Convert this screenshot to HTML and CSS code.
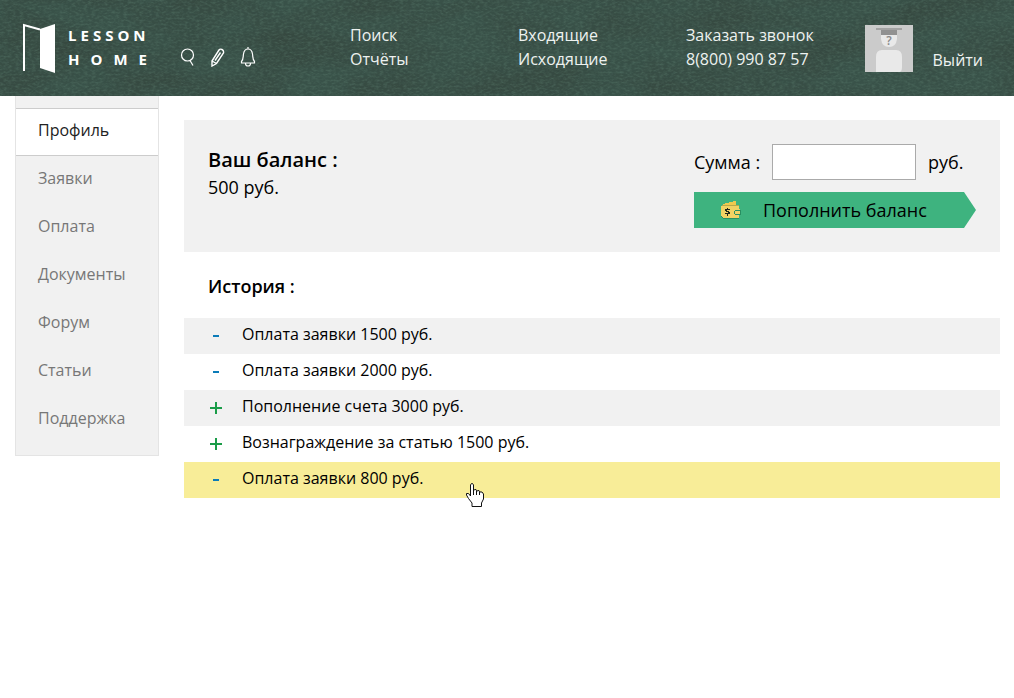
FILE: index.html
```html
<!DOCTYPE html>
<html lang="ru">
<head>
<meta charset="utf-8">
<meta name="viewport" content="width=device-width, initial-scale=1">
<title>Lesson Home</title>
<link rel="stylesheet" href="styles.css">
</head>
<body>
<header class="header">
  <svg class="board" width="100%" height="100%" preserveAspectRatio="none" aria-hidden="true">
    <filter id="grain" x="0" y="0" width="100%" height="100%" color-interpolation-filters="sRGB">
      <feTurbulence type="fractalNoise" baseFrequency="0.25 0.5" numOctaves="3" seed="8"/>
      <feColorMatrix values="0 0 0 0 0.4  0 0 0 0 0.55  0 0 0 0 0.48  0.7 0 0 0 -0.28"/>
    </filter>
    <filter id="smudge" x="0" y="0" width="100%" height="100%" color-interpolation-filters="sRGB">
      <feTurbulence type="fractalNoise" baseFrequency="0.012 0.03" numOctaves="4" seed="3"/>
      <feColorMatrix values="0 0 0 0 0.2  0 0 0 0 0.25  0 0 0 0 0.22  1 0 0 0 -0.3"/>
    </filter>
    <rect width="100%" height="100%" filter="url(#smudge)"/>
    <rect width="100%" height="100%" filter="url(#grain)"/>
  </svg>
  <div class="brand">
    <a class="logo" href="#">
      <svg width="34" height="50" viewBox="0 0 34 50" aria-hidden="true">
        <path d="M1 48V2L17 6.500" fill="none" stroke="#fff" stroke-width="2"/>
        <path d="M17 6L32 1V50L17 45Z" fill="#fff"/>
      </svg>
      <span class="logo-text"><span class="logo-top">LESSON</span><span class="logo-bottom">HOME</span></span>
    </a>
    <nav class="tools">
      <a href="#" aria-label="Поиск"><svg width="16" height="20" viewBox="0 0 16 20"><circle cx="7.500" cy="8" r="6" /><path d="M10 13.500l3 5"/></svg></a>
      <a href="#" aria-label="Редактировать"><svg width="16" height="20" viewBox="0 0 16 20"><path d="M2 14L9 3Q10 1.500 12 2.500T13.500 6L6.500 16.500L2 19ZM2 14l4.500 2.500M5 13.500L10.500 5.500" stroke-width="1.400"/></svg></a>
      <a href="#" aria-label="Уведомления"><svg width="16" height="20" viewBox="0 0 16 20"><path d="M8 0v2M1.500 14.500C3.500 12.500 3 10 3.500 7C4 3.500 5.500 2 8 2s4 1.500 4.500 5c.5 3 0 5.500 2 7.500v1.500h-13ZM5.500 16.500q0 2.500 2.500 2.500t2.500-2.500"/></svg></a>
    </nav>
  </div>
  <nav class="links">
    <div class="links-col"><a href="#">Поиск</a><a href="#">Отчёты</a></div>
    <div class="links-col"><a href="#">Входящие</a><a href="#">Исходящие</a></div>
    <div class="links-col"><a href="#">Заказать звонок</a><a href="#">8(800) 990 87 57</a></div>
  </nav>
  <div class="user">
    <svg class="avatar" width="48" height="47" viewBox="0 0 48 47" role="img" aria-label="Аватар">
      <rect width="48" height="47" fill="#cbcbcb"/>
      <path d="M16 10H32V14Q31 22 24 22T16 14Z" fill="#e9e9e9"/>
      <path d="M16 4H32V10H16Z" fill="#919191"/>
      <path d="M11 3H37V5H11Z" fill="#a2a2a2"/>
      <path d="M11 47V32Q11 25 17 25H31Q37 25 37 32V42Q37 46 35 47Z" fill="#e9e9e9"/>
      <text class="avatar-mark" x="24" y="20" text-anchor="middle">?</text>
    </svg>
    <a class="logout" href="#">Выйти</a>
  </div>
</header>
<div class="page">
  <nav class="sidebar">
    <a class="side-link side-link-active" href="#">Профиль</a>
    <a class="side-link" href="#">Заявки</a>
    <a class="side-link" href="#">Оплата</a>
    <a class="side-link" href="#">Документы</a>
    <a class="side-link" href="#">Форум</a>
    <a class="side-link" href="#">Статьи</a>
    <a class="side-link" href="#">Поддержка</a>
  </nav>
  <main class="main">
    <section class="balance">
      <div>
        <h1 class="balance-title">Ваш баланс :</h1>
        <p class="balance-value">500 руб.</p>
      </div>
      <form class="topup">
        <div class="amount">
          <label class="amount-label" for="sum">Сумма :</label>
          <input class="amount-input" id="sum" type="text">
          <span>руб.</span>
        </div>
        <button class="topup-button" type="button">
          <svg width="20" height="18" viewBox="0 0 20 18" shape-rendering="crispEdges" aria-hidden="true">
            <path d="M1 5H18V18H2L0 16V6Z" fill="#288f62"/>
            <path d="M2 3L14 0H15V4H2Z" fill="#efc94f"/>
            <path d="M0 5H18V8H19V14H18V17H2L0 15Z" fill="#f0d264"/>
            <path d="M1 4H18V5H1Z" fill="#b9a849"/>
            <path d="M14 9H20V14H14L13 13V10Z" fill="#288f62"/>
            <path d="M14 10H19V13H14Z" fill="#f0d264"/>
            <path d="M6 7H7V8H9V9H6V10H8V11H9V13H7V15H6V13H4V12H7V11H5V10H4V8H6Z" fill="#20251a"/>
          </svg>
          <span>Пополнить баланс</span>
        </button>
      </form>
    </section>
    <h2 class="history-title">История :</h2>
    <div class="history-area">
      <ul class="history">
        <li class="entry"><svg class="sign minus" viewBox="0 0 12 12" role="img" aria-label="Списание"><path d="M3 6H9"/></svg>Оплата заявки 1500 руб.</li>
        <li class="entry"><svg class="sign minus" viewBox="0 0 12 12" role="img" aria-label="Списание"><path d="M3 6H9"/></svg>Оплата заявки 2000 руб.</li>
        <li class="entry"><svg class="sign plus" viewBox="0 0 12 12" role="img" aria-label="Пополнение"><path d="M0 6H12M6 0V12"/></svg>Пополнение счета 3000 руб.</li>
        <li class="entry"><svg class="sign plus" viewBox="0 0 12 12" role="img" aria-label="Пополнение"><path d="M0 6H12M6 0V12"/></svg>Вознаграждение за статью 1500 руб.</li>
        <li class="entry entry-hover"><svg class="sign minus" viewBox="0 0 12 12" role="img" aria-label="Списание"><path d="M3 6H9"/></svg>Оплата заявки 800 руб.</li>
      </ul>
      <svg class="pointer" viewBox="0 0 18 24" aria-hidden="true">
        <path d="M4.500 13 V2 L5.500 0.500 H6.500 L7.500 2 V7 L10 6.500 L11 8 L13 7.500 L14 9 L16 9 L17.500 11 V16 L15.500 20 V23.500 H6 V20 L2.500 15.500 L0.500 12 V10.500 H2.500 Z" fill="#ffffff" stroke="#111111" stroke-linejoin="round"/>
        <path d="M7.500 7 V12 M10.500 8 V12 M13.500 9 V12" fill="none" stroke="#111111"/>
      </svg>
    </div>
  </main>
</div>
</body>
</html>
```
FILE: styles.css
```css
* { box-sizing: border-box; }
body {
  margin: 0;
  min-height: 100vh;
  background: #fff;
  color: #000;
  font: 400 16px/24px "Open Sans", "Noto Sans", sans-serif;
}
a { color: inherit; text-decoration: none; }
h1, h2, p, ul { margin: 0; padding: 0; }

.header {
  position: relative;
  isolation: isolate;
  display: flex;
  align-items: flex-start;
  min-height: 96px;
  padding: 23px 31px 0 23px;
  background: #395249;
  color: #eef2f0;
}
.board { position: absolute; inset: 0; z-index: -1; }
.brand { display: flex; gap: 22px; width: 327px; }
.logo { display: flex; gap: 11px; }
.logo-text { display: flex; flex-direction: column; font-size: 15px; font-weight: 700; color: #fff; }
.logo-top { letter-spacing: 4px; }
.logo-bottom { letter-spacing: 11px; }
.tools { display: flex; gap: 14px; padding-top: 24px; }
.tools svg { display: block; fill: none; stroke: #fff; stroke-width: 1.2; }
.links { display: grid; grid-template-columns: repeat(3, 168px); }
.links-col { display: flex; flex-direction: column; }
.user { display: flex; gap: 20px; margin-left: auto; padding-top: 2px; }
.avatar-mark { font-size: 12px; font-weight: 600; fill: #888; }
.logout { padding-top: 23px; }

.page { display: flex; align-items: flex-start; gap: 25px; padding: 0 14px 0 15px; }
.sidebar {
  flex: none;
  width: 144px;
  padding: 12px 0 11px;
  background: #f1f1f1;
  border: 1px solid #e4e4e4;
  border-top: 0;
}
.side-link { display: block; height: 48px; padding: 10px 22px; color: #777; }
.side-link-active {
  padding-top: 9px;
  background: #fff;
  border: solid #ccc;
  border-width: 1px 0;
  color: #222;
}
.main { flex: 1; padding-top: 24px; }
.balance {
  display: flex;
  justify-content: space-between;
  min-height: 132px;
  padding: 24px;
  background: #f1f1f1;
  font-size: 18px;
}
.balance-title { padding-top: 3px; font-size: 20px; line-height: 26px; font-weight: 600; }
.balance-value { line-height: 28px; }
.topup { display: flex; flex-direction: column; gap: 12px; width: 282px; }
.amount { display: flex; align-items: center; gap: 12px; line-height: 26px; }
.amount-label { width: 66px; white-space: nowrap; }
.amount-input {
  width: 144px;
  height: 36px;
  padding: 0 8px;
  border: 1px solid #aaa;
  background: #fff;
  font: inherit;
}
.topup-button {
  display: flex;
  align-items: center;
  gap: 22px;
  height: 36px;
  padding: 0 27px;
  border: 0;
  background: #3eb37f;
  color: #000;
  clip-path: polygon(0 0, calc(100% - 12px) 0, 100% 50%, calc(100% - 12px) 100%, 0 100%);
  font: inherit;
  cursor: pointer;
}
.history-title { padding: 22px 24px 20px; font-size: 18px; line-height: 24px; font-weight: 600; }
.history-area { position: relative; }
.history { list-style: none; }
.entry {
  display: flex;
  align-items: center;
  gap: 20px;
  height: 36px;
  padding: 0 26px 4px;
}
.entry:nth-child(odd) { background: #f1f1f1; }
.entry.entry-hover { background: #f8ed98; }
.sign { width: 12px; height: 12px; margin-top: 4px; stroke-width: 2; }
.minus { stroke: #0b7bb8; }
.plus { stroke: #1a9c48; }
.pointer { position: absolute; left: 282px; top: 165px; width: 18px; height: 24px; }
```
